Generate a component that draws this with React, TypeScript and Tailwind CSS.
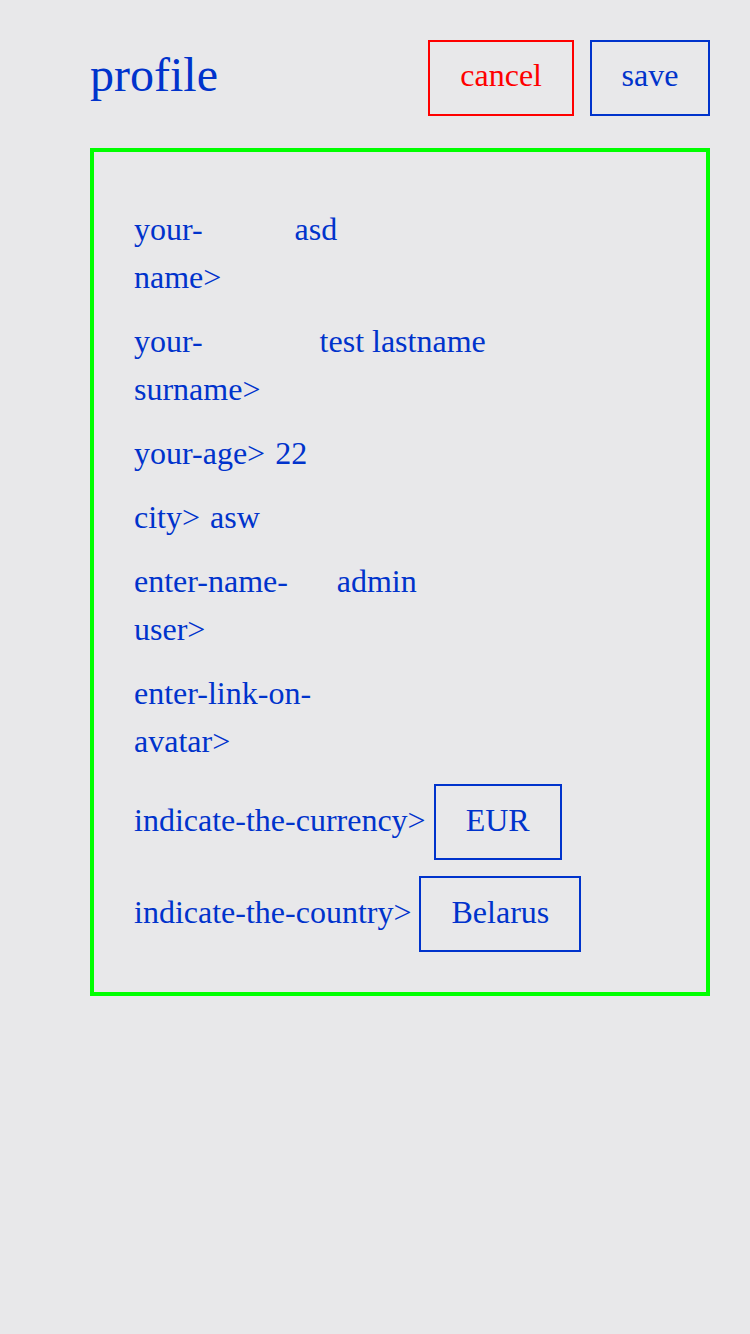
import React from "react"

const fields = [
  { label: "your-name>", value: "asd" },
  { label: "your-surname>", value: "test lastname" },
  { label: "your-age>", value: "22" },
  { label: "city>", value: "asw" },
  { label: "enter-name-user>", value: "admin" },
  { label: "enter-link-on-avatar>", value: "" },
]

const selects = [
  { label: "indicate-the-currency>", value: "EUR" },
  { label: "indicate-the-country>", value: "Belarus" },
]

export default function App() {
  return (
    <div
      className="min-h-[1334px] w-full bg-[#e8e8ea] pl-[90px] pr-[40px] pt-[40px] text-[#0033cc]"
      style={{ fontFamily: '"Liberation Serif", "Times New Roman", serif' }}
    >
      <div className="flex items-center justify-between">
        <h1 className="mb-[6px] text-[48px] leading-[56px]">profile</h1>
        <div className="flex gap-4">
          <button className="border-2 border-[#ff0000] px-[30px] pb-[15px] pt-[9px] text-[32px] leading-[48px] text-[#ff0000]">
            cancel
          </button>
          <button className="w-[120px] border-2 border-[#0033cc] pb-[15px] pt-[9px] text-[32px] leading-[48px] text-[#0033cc]">
            save
          </button>
        </div>
      </div>

      <div className="mt-8 border-4 border-[#00ff00] px-10 pb-10 pt-[53px]">
        <div className="flex flex-col gap-4 text-[32px] leading-[48px]">
          {fields.map((f) => (
            <div key={f.label} className="flex w-full items-start gap-[10px]">
              <span>{f.label}</span>
              <span className="w-[385px]">{f.value}</span>
            </div>
          ))}
          <div className="mt-[3px] flex flex-col gap-4">
            {selects.map((s) => (
              <div key={s.label} className="flex items-center gap-2">
                <span className="mb-1">{s.label}</span>
                <div className="border-2 border-[#0033cc] px-[30px] pb-[14px] pt-[10px]">{s.value}</div>
              </div>
            ))}
          </div>
        </div>
      </div>
    </div>
  )
}
